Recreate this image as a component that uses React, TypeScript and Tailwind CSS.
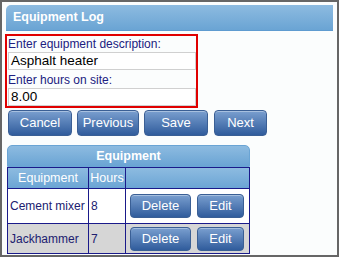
import React from "react";

const btn =
  "rounded-[4px] border border-[#3a5f95] bg-gradient-to-b from-[#7a9fcf] to-[#305c9c] text-white text-[13px] font-['Liberation_Sans',Arial,sans-serif] shadow-[inset_0_1px_0_rgba(255,255,255,0.35)] flex items-center justify-center";

export default function App() {
  return (
    <div className="w-[342px] h-[259px] bg-white font-['Liberation_Sans',Arial,sans-serif]">
      <div className="w-[339px] h-[257px] border-2 border-[#666] bg-[#fbfdfd] pl-[4px] pt-[3px] pr-[3px] flex flex-col">
        <div className="h-[26px] w-[327px] shrink-0 rounded-tl-[5px] bg-gradient-to-b from-[#8dbbe0] to-[#6aa4d4] border-b border-[#5e9bd0] flex items-center pl-[7px] text-white font-bold text-[12.5px]">
          Equipment Log
        </div>
        <div className="mt-[3px] -ml-[1px] w-[193px] border-2 border-[#e00000] pl-[1px] pt-[1px] flex flex-col">
          <div className="text-[12px] leading-[14px] text-[#202080]">Enter equipment description:</div>
          <div className="mt-[1px] h-[18px] border border-[#d0d0d0] bg-white pl-[2px] text-[13.5px] leading-[16px] text-black">Asphalt heater</div>
          <div className="mt-[3px] text-[12px] leading-[14px] text-[#202080]">Enter hours on site:</div>
          <div className="mt-[1px] h-[18px] border border-[#d0d0d0] bg-white pl-[2px] text-[13.5px] leading-[16px] text-black">8.00</div>
        </div>
        <div className="mt-[2px] ml-[2px] flex">
          <button className={btn + " h-[26px] w-[64px]"}>Cancel</button>
          <button className={btn + " h-[26px] w-[62px] ml-[5px]"}>Previous</button>
          <button className={btn + " h-[26px] w-[64px] ml-[5px]"}>Save</button>
          <button className={btn + " h-[26px] w-[53px] ml-[6px]"}>Next</button>
        </div>
        <div className="mt-[9px] ml-[1px] w-[243px] flex flex-col">
          <div className="h-[22px] rounded-t-[5px] bg-gradient-to-b from-[#8dbbe0] to-[#6aa4d4] border border-[#6aa4d4] flex items-center justify-center text-white font-bold text-[12.5px]">
            Equipment
          </div>
          <table className="table-fixed border-collapse text-[12px] w-[243px]">
            <colgroup>
              <col className="w-[81px]" />
              <col className="w-[37px]" />
              <col />
            </colgroup>
            <tbody>
              <tr className="h-[21px] bg-gradient-to-b from-[#8dbbe0] to-[#6aa4d4] text-white text-[12.5px]">
                <td className="border border-[#1a1a8a] text-center">Equipment</td>
                <td className="border border-[#1a1a8a] text-center">Hours</td>
                <td className="border border-[#1a1a8a]"></td>
              </tr>
              <tr className="h-[35px] bg-white text-[#202070] text-[12px]">
                <td className="border border-[#1a1a8a] pl-[2px] whitespace-nowrap">Cement mixer</td>
                <td className="border border-[#1a1a8a] pl-[2px]">8</td>
                <td className="border border-[#1a1a8a] pl-[4px]">
                  <div className="flex gap-[6px]">
                    <button className={btn + " h-[24px] w-[61px]"}>Delete</button>
                    <button className={btn + " h-[24px] w-[47px]"}>Edit</button>
                  </div>
                </td>
              </tr>
              <tr className="h-[30px] bg-[#d6d6d6] text-[#202070] text-[12px]">
                <td className="border border-[#1a1a8a] pl-[2px] whitespace-nowrap">Jackhammer</td>
                <td className="border border-[#1a1a8a] pl-[2px]">7</td>
                <td className="border border-[#1a1a8a] pl-[4px]">
                  <div className="flex gap-[6px]">
                    <button className={btn + " h-[24px] w-[61px]"}>Delete</button>
                    <button className={btn + " h-[24px] w-[47px]"}>Edit</button>
                  </div>
                </td>
              </tr>
            </tbody>
          </table>
        </div>
      </div>
    </div>
  );
}
